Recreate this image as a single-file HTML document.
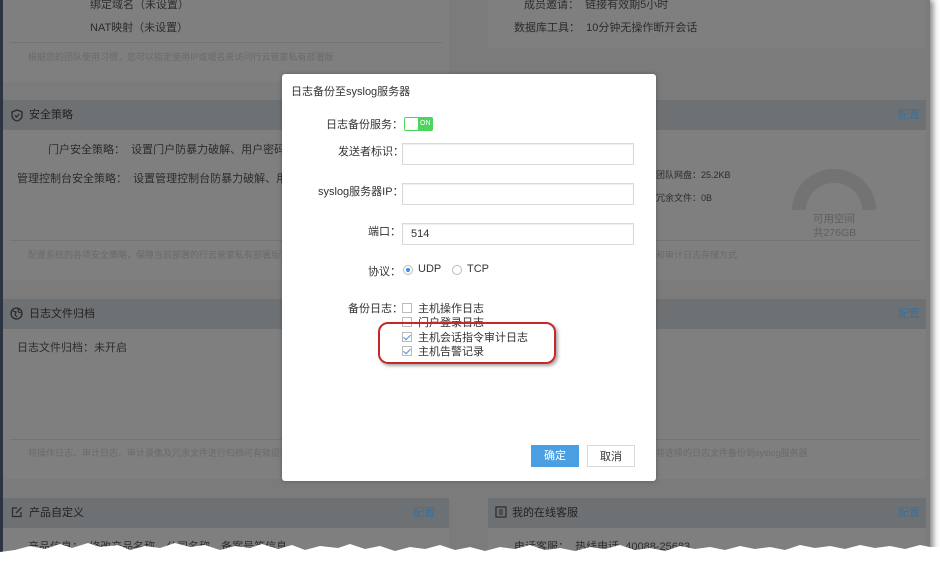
<!DOCTYPE html>
<html><head><meta charset="utf-8">
<style>
*{margin:0;padding:0;box-sizing:border-box}
body{width:940px;height:561px;overflow:hidden;background:#fff;font-family:"Liberation Sans","Noto Sans CJK SC",sans-serif;position:relative;font-size:11px;color:#2a2a2a}
.page{position:absolute;left:0;top:0;width:930px;height:561px;background:#7b7b7b;box-shadow:3px 0 6px rgba(0,0,0,.5)}
.strip{position:absolute;left:0;top:0;width:3px;height:561px;background:#2b3440}
.p{position:absolute;background:#7f7f7f}
.h{position:absolute;background:#6e7173;height:30px;color:#222;font-size:11px;line-height:30px;padding-left:26px}
.h .cfg{position:absolute;right:6px;top:0;color:#3d6f99}
.t{position:absolute;white-space:nowrap;color:#2c2c2c;font-size:11px}
.g{position:absolute;white-space:nowrap;color:#6a6a6a;font-size:9px}
.ln{position:absolute;height:1px;background:#737373}
.modal{position:absolute;left:282px;top:74px;width:374px;height:407px;background:#fff;border-radius:3px;box-shadow:0 0 4px rgba(0,0,0,.3)}
.m{position:absolute;white-space:nowrap;font-size:11px;color:#333}
.in{position:absolute;left:120px;width:232px;height:22px;border:1px solid #d8d8d8;box-shadow:inset 0 1px 1px #eee}
.cb{position:absolute;left:120px;width:10px;height:10px;border:1px solid #bbb;background:#fff}
.ck::after{content:"";position:absolute;left:2px;top:0px;width:3px;height:6px;border:solid #4a90d9;border-width:0 1.3px 1.3px 0;transform:rotate(45deg)}
.btn{position:absolute;top:371px;width:48px;height:22px;font-size:11px;line-height:22px;text-align:center}
</style></head><body>
<div class="page">
<div class="strip"></div>
<!-- left column -->
<div class="p" style="left:3px;top:0;width:446px;height:82px"></div>
<div class="t" style="left:90px;top:-4px">绑定域名（未设置）</div>
<div class="t" style="left:90px;top:19px">NAT映射（未设置）</div>
<div class="ln" style="left:10px;top:42px;width:432px"></div>
<div class="g" style="left:28px;top:50px">根据您的团队使用习惯，您可以指定使用IP或域名来访问行云管家私有部署版</div>

<div class="p" style="left:3px;top:100px;width:446px;height:180px"></div>
<div class="h" style="left:3px;top:100px;width:446px">安全策略</div>
<svg style="position:absolute;left:11px;top:109px" width="12" height="13" viewBox="0 0 12 13"><path d="M6 1 L11 3 V6.5 C11 9.5 8.5 11.5 6 12 C3.5 11.5 1 9.5 1 6.5 V3 Z" fill="none" stroke="#2a2a2a" stroke-width="1.3"/><path d="M3.8 6.5 L5.5 8 L8.3 5" fill="none" stroke="#2a2a2a" stroke-width="1.2"/></svg>
<div class="t" style="left:48px;top:141px">门户安全策略：&nbsp; 设置门户防暴力破解、用户密码强度</div>
<div class="t" style="left:17px;top:170px">管理控制台安全策略：&nbsp; 设置管理控制台防暴力破解、用户密码</div>
<div class="ln" style="left:10px;top:240px;width:432px"></div>
<div class="g" style="left:28px;top:248px">配置系统的各项安全策略，保障当前部署的行云管家私有部署版安全</div>

<div class="p" style="left:3px;top:299px;width:446px;height:180px"></div>
<div class="h" style="left:3px;top:299px;width:446px">日志文件归档</div>
<svg style="position:absolute;left:10px;top:307px" width="13" height="13" viewBox="0 0 13 13"><circle cx="6.5" cy="6.5" r="5.5" fill="none" stroke="#2a2a2a" stroke-width="1.3"/><path d="M3 4 L6 5 L5 8 L7 10 M8 2 L8.5 5 L11 6" fill="none" stroke="#2a2a2a" stroke-width="1.2"/></svg>
<div class="t" style="left:17px;top:339px">日志文件归档：未开启</div>
<div class="ln" style="left:10px;top:439px;width:432px"></div>
<div class="g" style="left:28px;top:446px">将操作日志、审计日志、审计录像及冗余文件进行归档可有效提升</div>

<div class="p" style="left:3px;top:498px;width:446px;height:63px"></div>
<div class="h" style="left:3px;top:498px;width:446px">产品自定义<span class="cfg" style="right:14px">配置</span></div>
<svg style="position:absolute;left:11px;top:506px" width="12" height="12" viewBox="0 0 12 12"><path d="M6 2 H1.5 V10.5 H10 V6" fill="none" stroke="#2a2a2a" stroke-width="1.2"/><path d="M5 7 L10.5 1.5" stroke="#2a2a2a" stroke-width="1.3"/></svg>
<div class="t" style="left:28px;top:538px">产品信息：&nbsp; 修改产品名称、公司名称、备案号等信息</div>

<!-- right column -->
<div class="p" style="left:488px;top:0;width:438px;height:48px"></div>
<div class="t" style="left:524px;top:-4px">成员邀请：&nbsp; 链接有效期5小时</div>
<div class="t" style="left:514px;top:19px">数据库工具：&nbsp; 10分钟无操作断开会话</div>

<div class="p" style="left:488px;top:100px;width:438px;height:180px"></div>
<div class="h" style="left:488px;top:100px;width:438px"><span class="cfg">配置</span></div>
<div class="t" style="left:656px;top:168px;font-size:9px">团队网盘：25.2KB</div>
<div class="t" style="left:656px;top:191px;font-size:9px">冗余文件：0B</div>
<svg style="position:absolute;left:792px;top:169px" width="84" height="42" viewBox="0 0 84 42"><path d="M0 41 A42 41 0 0 1 84 41 L70 41 A28 27 0 0 0 14 41 Z" fill="#737373"/></svg>
<div class="t" style="left:813px;top:211px;color:#5f5f5f;font-size:10.5px">可用空间</div>
<div class="t" style="left:813px;top:225px;color:#5f5f5f;font-size:10.5px">共276GB</div>
<div class="ln" style="left:494px;top:240px;width:426px"></div>
<div class="g" style="left:656px;top:248px">和审计日志存储方式</div>

<div class="p" style="left:488px;top:299px;width:438px;height:180px"></div>
<div class="h" style="left:488px;top:299px;width:438px"><span class="cfg">配置</span></div>
<div class="ln" style="left:494px;top:439px;width:426px"></div>
<div class="g" style="left:656px;top:446px">将选择的日志文件备份到syslog服务器</div>

<div class="p" style="left:488px;top:498px;width:438px;height:63px"></div>
<div class="h" style="left:488px;top:498px;width:438px;padding-left:24px">我的在线客服<span class="cfg">配置</span></div>
<svg style="position:absolute;left:495px;top:506px" width="12" height="12" viewBox="0 0 12 12"><rect x="1" y="1" width="10" height="10" fill="none" stroke="#2a2a2a" stroke-width="1.2"/><path d="M4 4 H8 M4 6 H8 M4 8 H8" stroke="#2a2a2a" stroke-width="1"/></svg>
<div class="t" style="left:514px;top:538px">电话客服：&nbsp; 热线电话 &nbsp;40088-25683</div>
</div>

<div class="modal">
<div class="m" style="left:9px;top:9px">日志备份至syslog服务器</div>
<div class="m" style="left:44px;top:42px">日志备份服务：</div>
<div style="position:absolute;left:122px;top:43px;width:29px;height:14px;background:#4cd45c;border-radius:2px"><div style="position:absolute;left:1px;top:1px;width:13px;height:12px;background:#fff;border-radius:1px"></div><span style="position:absolute;left:16px;top:1px;font-size:7px;color:#fff;line-height:12px">ON</span></div>
<div class="m" style="left:56px;top:69px">发送者标识：</div>
<div class="in" style="top:69px"></div>
<div class="m" style="left:36px;top:109px">syslog服务器IP：</div>
<div class="in" style="top:109px"></div>
<div class="m" style="left:86px;top:149px">端口：</div>
<div class="in" style="top:149px"><span style="position:absolute;left:8px;top:4px;font-size:11px;color:#333">514</span></div>
<div class="m" style="left:86px;top:189px">协议：</div>
<div style="position:absolute;left:121px;top:191px;width:10px;height:10px;border:1px solid #bbb;border-radius:50%"><div style="position:absolute;left:2px;top:2px;width:4px;height:4px;border-radius:50%;background:#3a8ee6"></div></div>
<div class="m" style="left:136px;top:189px">UDP</div>
<div style="position:absolute;left:170px;top:191px;width:10px;height:10px;border:1px solid #bbb;border-radius:50%"></div>
<div class="m" style="left:185px;top:189px">TCP</div>
<div class="m" style="left:66px;top:226px">备份日志：</div>
<div class="cb" style="top:229px"></div><div class="m" style="left:136px;top:226px">主机操作日志</div>
<div class="cb" style="top:243px"></div><div class="m" style="left:136px;top:240px">门户登录日志</div>
<div class="cb ck" style="top:258px"></div><div class="m" style="left:136px;top:255px">主机会话指令审计日志</div>
<div class="cb ck" style="top:272px"></div><div class="m" style="left:136px;top:269px">主机告警记录</div>
<div style="position:absolute;left:96px;top:248px;width:178px;height:42px;border:2px solid #c62828;border-radius:10px;box-shadow:2px 2px 3px rgba(0,0,0,.35)"></div>
<div class="btn" style="left:249px;background:#4a9fe3;color:#fff">确定</div>
<div class="btn" style="left:305px;border:1px solid #d8d8d8;color:#333">取消</div>
</div>

<svg style="position:absolute;left:0;top:538px" width="940" height="23" viewBox="0 0 940 23">
<polygon fill="#fff" points="0,14 15,12 30,8 45,11 60,6 72,10 88,5 100,9 118,7 130,12 145,8 160,10 175,5 190,9 205,7 220,12 235,8 250,10 262,6 278,11 292,7 305,12 320,8 338,10 350,6 365,11 380,8 395,13 410,9 425,11 440,7 455,12 470,9 485,13 500,9 515,11 530,7 545,12 560,10 575,13 590,9 605,11 620,7 635,12 650,10 665,13 680,8 695,11 710,9 725,12 740,8 755,11 770,9 785,12 800,7 815,10 830,8 845,11 860,7 875,10 890,8 905,11 920,7 930,9 940,9 940,23 0,23"/>
</svg>
</body></html>
